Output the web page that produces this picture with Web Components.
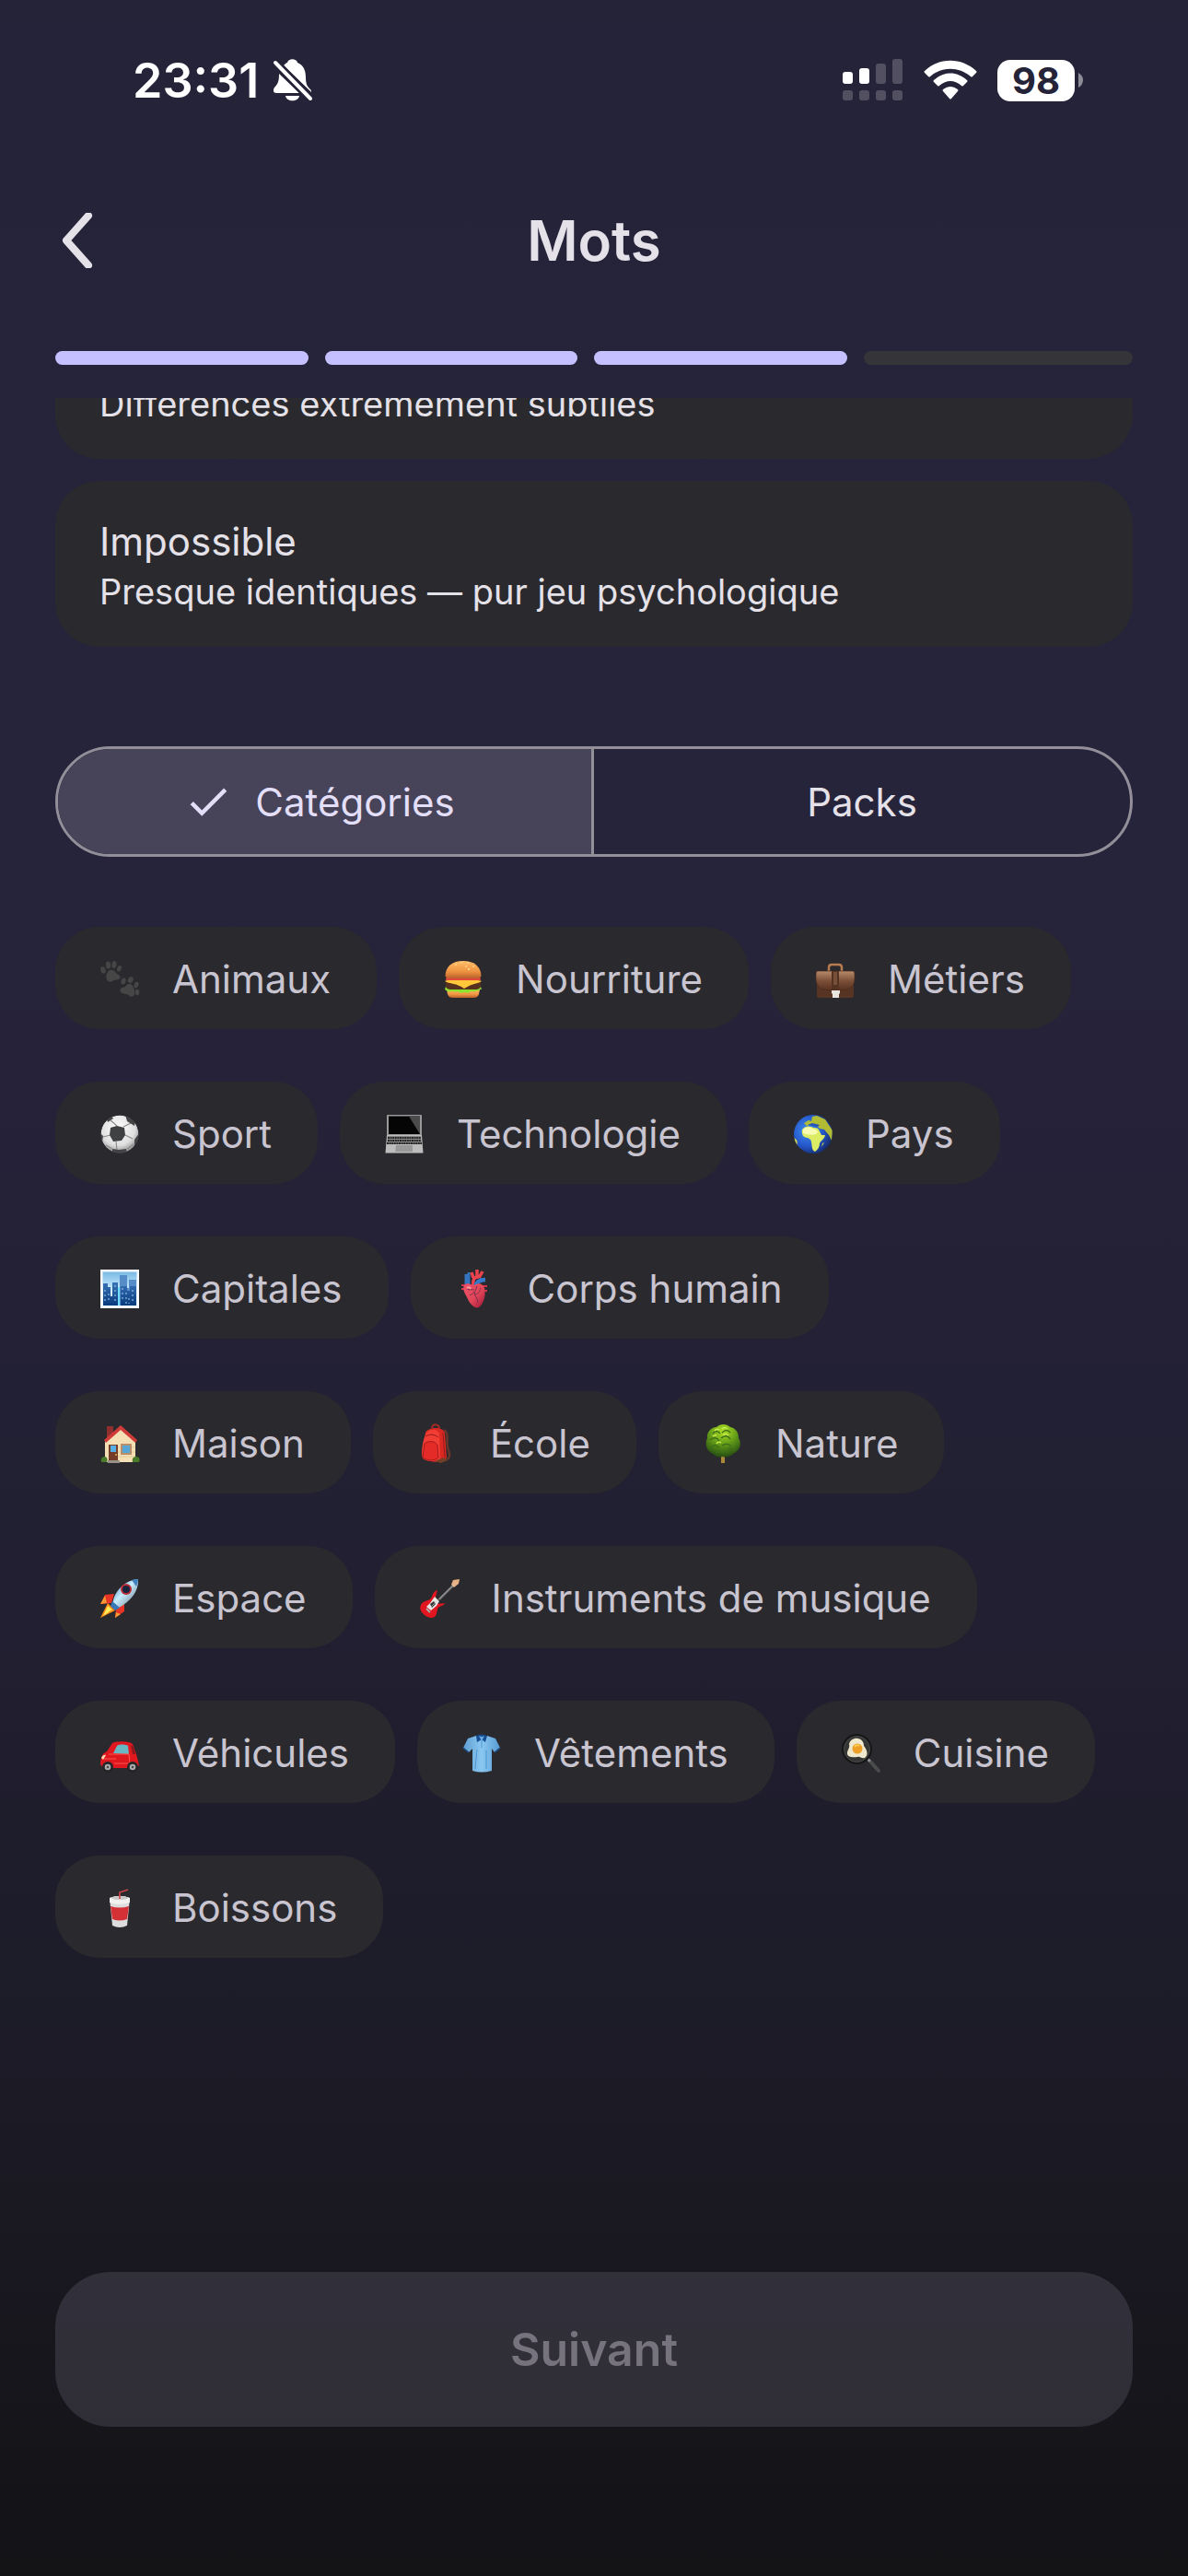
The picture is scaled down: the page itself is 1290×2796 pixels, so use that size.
<!DOCTYPE html>
<html lang="fr">
<head>
<meta charset="UTF-8">
<meta name="viewport" content="width=device-width, initial-scale=1.0">
<title>Mots</title>
<style>
    :root {
        --surface: #2a292e;
        --surface-high: #353438;
        --primary: #c5c0ff;
        --text: #e5e1e9;
        --text-soft: #c8c5d0;
        --outline: #928f99;
        --edge: 60px;
    }
    body {
        margin: 0;
        font-family: Inter, "Liberation Sans", sans-serif;
        color: var(--text);
        background: #131316;
    }
</style>
</head>
<body>
    <app-screen>
        <status-bar slot="top" time="23:31" battery="98"></status-bar>
        <screen-header slot="top">Mots</screen-header>
        <step-progress slot="top" steps="4" done="3"></step-progress>

        <level-card>Différences extrêmement subtiles</level-card>
        <level-card heading="Impossible">Presque identiques — pur jeu psychologique</level-card>
        <source-toggle></source-toggle>
        <chip-list>
            <category-chip icon="paws">Animaux</category-chip>
            <category-chip icon="burger">Nourriture</category-chip>
            <category-chip icon="briefcase">Métiers</category-chip>
            <category-chip icon="ball">Sport</category-chip>
            <category-chip icon="laptop">Technologie</category-chip>
            <category-chip icon="globe">Pays</category-chip>
            <category-chip icon="city">Capitales</category-chip>
            <category-chip icon="heart">Corps humain</category-chip>
            <category-chip icon="house">Maison</category-chip>
            <category-chip icon="backpack">École</category-chip>
            <category-chip icon="tree">Nature</category-chip>
            <category-chip icon="rocket">Espace</category-chip>
            <category-chip icon="guitar">Instruments de musique</category-chip>
            <category-chip icon="car">Véhicules</category-chip>
            <category-chip icon="shirt">Vêtements</category-chip>
            <category-chip icon="pan">Cuisine</category-chip>
            <category-chip icon="cup">Boissons</category-chip>
        </chip-list>

        <next-button slot="bottom">Suivant</next-button>
    </app-screen>

<script>
// Category pictures, all on a 44x44 grid
const ICONS = {
    paws: `
        <g fill="#464646">
            <path d="M9 14c2-3 6-3 8 0 1 2 6 3 5.500 6-.5 3-4 2-6.500 3s-4 2.500-6.500 1S6.500 17 9 14z"/>
            <ellipse cx="4" cy="12" rx="2.600" ry="3.800" transform="rotate(-15 4 12)"/>
            <ellipse cx="9.500" cy="6.500" rx="2.600" ry="4" transform="rotate(-5 9 6)"/>
            <ellipse cx="16" cy="6" rx="2.500" ry="3.900" transform="rotate(8 16 6)"/>
            <ellipse cx="21.500" cy="10" rx="2.200" ry="3.400" transform="rotate(25 21 10)"/>
            <path d="M29 29c2-2.500 5-2.500 6.500-.5 2 3 3 5 2.500 9s-4 4-6 2-4-1-7-2.500-3.500-4-1-5.500 3.500-.5 5-2.500z"/>
            <ellipse cx="26" cy="24" rx="2.500" ry="3.600" transform="rotate(15 26 24)"/>
            <ellipse cx="34" cy="22.500" rx="2.700" ry="3.600" transform="rotate(28 34 22)"/>
            <ellipse cx="40" cy="28" rx="2.300" ry="3.500" transform="rotate(20 40 28)"/>
            <ellipse cx="41" cy="36" rx="2.300" ry="3.300"/>
        </g>`,
    burger: `
        <defs><linearGradient id="bun" x2="0" y2="1"><stop stop-color="#ffbd68"/><stop offset=".6" stop-color="#ee9441"/><stop offset="1" stop-color="#b8602a"/></linearGradient></defs>
        <path d="M4 33h36l-1 5c-1 3-3 4-6 4H11c-3 0-5-1-6-4z" fill="url(#bun)"/>
        <path d="M3 30h38l1 3c-3-1-3 3-6 1-2 3-4 0-6 1-2 3-5 1-7 1-3 2-5 0-7-1-3 2-5-1-7 0-2 1-4 0-7-2z" fill="#8ee22d"/>
        <path d="M3 25h38v4c0 3-3 4-6 4H9c-3 0-6-1-6-4z" fill="#57301f"/>
        <path d="M2 24c0-2 40-2 40 0-4 3-10 2-19 8-8-6-16-5-21-8z" fill="#ffc739"/>
        <rect x="3" y="20" width="38" height="3" rx="1.500" fill="#e5473d"/>
        <path d="M2.500 18C3 8 10 2 22 2s19 6 19.500 16c0 2-3 3-6 3h-27c-3 0-6-1-6-3z" fill="url(#bun)"/>
        <g fill="#ffe6ad"><circle cx="14" cy="6" r=".8"/><circle cx="20" cy="4" r=".8"/><circle cx="25" cy="8" r=".8"/><circle cx="27" cy="4" r=".8"/><circle cx="28" cy="11" r=".9"/><circle cx="33" cy="8" r=".8"/></g>`,
    briefcase: `
        <defs><linearGradient id="bag" x2="0" y2="1"><stop stop-color="#b78b6b"/><stop offset=".5" stop-color="#7d5139"/><stop offset="1" stop-color="#57301f"/></linearGradient></defs>
        <path d="M15 13V9q0-3 3-3h8q3 0 3 3v4" fill="none" stroke="#b67c50" stroke-width="2.500"/>
        <rect x="2" y="14" width="40" height="28" rx="2" fill="#583424"/>
        <path d="M3 13h38q2 0 2 3v5c0 9-6 13-14 13H15C7 34 1 30 1 21v-5q0-3 2-3z" fill="url(#bag)" stroke="#4c2b1d" stroke-width=".7"/>
        <path d="M18 13h8v20h-8z" fill="#553323"/><path d="M20 14h4v14h-4z" fill="#77503c"/>
        <path d="M18 34h9v3l-1 1v4h-7v-4l-1-1z" fill="#e8e5e1"/>`,
    ball: `
        <defs><radialGradient id="skin" cx=".45" cy=".35" r=".65"><stop stop-color="#fff"/><stop offset=".7" stop-color="#dedede"/><stop offset="1" stop-color="#8e8e8e"/></radialGradient><clipPath id="round"><circle cx="22" cy="22" r="20.500"/></clipPath></defs>
        <g clip-path="url(#round)">
            <circle cx="22" cy="22" r="20.500" fill="url(#skin)"/>
            <path d="M19 13l-7-6M19 13M26 14l8-4M28 23l8 4M18 30l1 9M12 23l-8 2M7 34l7 4M30 38l7-5" stroke="#8c8c8c" stroke-width="1.200" fill="none"/>
            <path d="M12 15l7-2 8 2 1 8-4 6-9 1-4-7z" fill="#3f4143"/>
            <path d="M28 1l11 7-1 5-8-5zM8 6l5-4 2 3-6 4zM0 20l4 4-1 7-3-3zM44 20l-6 8 0 7 6-5zM14 38l7 1 8-1 1 6H14z" fill="#414345"/>
        </g>`,
    laptop: `
        <path d="M4 1h36q1 0 1 1v21H3V2q0-1 1-1z" fill="#9a9a9a"/>
        <path d="M5 2.500h34V22H5z" fill="#050505"/><path d="M27 2.500h12V22z" fill="#4b4b4b"/>
        <path d="M3 23h38l1.500 19.500h-41z" fill="#bdbdbd"/>
        <path d="M4 24h36l1 9H3z" fill="#888"/>
        <path d="M4 26h36M4 29h36M3 32h38" stroke="#252525" stroke-width="2" stroke-dasharray="2 .6"/>
        <path d="M13 34h18v7H12z" fill="#999"/>`,
    globe: `
        <defs><radialGradient id="sea" cx=".35" cy=".4" r=".7"><stop stop-color="#3e8df2"/><stop offset=".6" stop-color="#2455c7"/><stop offset="1" stop-color="#142761"/></radialGradient><clipPath id="disc"><circle cx="22" cy="22" r="21"/></clipPath></defs>
        <circle cx="22" cy="22" r="21" fill="url(#sea)"/>
        <g clip-path="url(#disc)">
            <path d="M10 17c3-4 7-4 10-3 3 2 6 0 8 3l3 6 4 0c-1 5-5 6-6 9 0 4-2 7-5 9-4-2-3-6-4-10 0-3-2-4-4-5-5 0-7-4-6-9z" fill="#dcec65"/>
            <path d="M11 17c3-3 7-3 10-1 2 1 4 0 6 4-3 4-10 3-16 1z" fill="#ffffc8" opacity=".8"/>
            <path d="M12 10l5-3 3 1 1-5 5-1 9 4 8 12-1 11-3-6-5-6-5-1-4-4-5-1-5 2z" fill="#b2bb34"/>
            <path d="M0 26c5 1 6 5 3 11zM34 31l-3 5 1-4z" fill="#d6d943"/>
            <path d="M16 12l5-2 8 2-2 2-6-1z" fill="#2355b4"/>
        </g>`,
    city: `
        <defs><linearGradient id="sky" x2="0" y2="1"><stop stop-color="#79b9e6"/><stop offset=".6" stop-color="#d9f4ff"/></linearGradient><linearGradient id="tower" x2="0" y2="1"><stop stop-color="#3973b7"/><stop offset="1" stop-color="#073b7d"/></linearGradient></defs>
        <rect x="1" y="1" width="42" height="42" fill="#f8fbff"/>
        <rect x="3.500" y="3.500" width="37" height="37" fill="url(#sky)"/>
        <path d="M22 7h8v14h2V12h8v28H22z" fill="#568dc8"/>
        <path d="M4 16h5v4h3v10h2V15h6v25H4zM23 19h7v5h3v-5h7v21H23z" fill="url(#tower)"/>
        <path d="M20 20h2v20h-2z" fill="#70dfff"/>
        <path d="M6 23v15M10 27v10M17 18v18M25 21v15M29 26v12M36 23v15M32 32v6" stroke="#a7d5f4" stroke-dasharray="2 3"/>`,
    heart: `
        <defs><linearGradient id="muscle" x2="1" y2="1"><stop stop-color="#ef5269"/><stop offset=".55" stop-color="#e14658"/><stop offset="1" stop-color="#9e1436"/></linearGradient></defs>
        <path d="M12 17V6M15 18V4" stroke="#3575bf" stroke-width="3"/>
        <path d="M20 20c-1-9 1-11 6-11M18 4l2 6M24 1v7M30 3l-4 7" fill="none" stroke="#e9434e" stroke-width="3.500"/>
        <path d="M22 20c1-6 5-8 11-8" fill="none" stroke="#3478c7" stroke-width="4.500"/>
        <path d="M7 18h6M7 22h4M30 19h5M31 24h4" stroke="#d4354b" stroke-width="2"/>
        <path d="M10 18c4-4 8 0 11 0 5-3 9-2 11 3 2 8-1 17-6 21-4 2-10-3-13-11-3-5-5-9-3-13z" fill="url(#muscle)"/>
        <path d="M24 19c-2 7-4 8-8 10m5-4c0 5 4 7 4 12m-3-9c4-1 5-3 6-7m-15 1c4 2 5 0 8 1" fill="none" stroke="#79304f"/>
        <path d="M13 21q3-2 4 1" stroke="#ff9aa2" stroke-width="2" fill="none"/>`,
    house: `
        <path d="M8 3h7v12H8z" fill="#8f302e"/>
        <path d="M6 20L23 4l16 16v22H6z" fill="#f5dfb5"/>
        <path d="M23 2l18 16-2 3L23 7 7 21l-2-3z" fill="#cf3b38"/>
        <path d="M9 26h30M9 31h30M9 36h30" stroke="#dcc394" stroke-width=".7"/>
        <path d="M10 23h10v18H10z" fill="#743d2a"/><path d="M12 24h6v7h-6z" fill="#55aee5"/><circle cx="18" cy="34" r=".9" fill="#f9c04f"/>
        <path d="M23 22h12v12H23z" fill="#b98f69"/><path d="M25 24h8v8h-8z" fill="#58a6d8"/>
        <path d="M9 40h13v3H9z" fill="#999189"/>
        <path d="M2 42c-1-4 1-6 4-6 3 1 3 4 2 6zM36 42c-1-4 1-6 4-6 4 0 4 4 3 6z" fill="#477b2a"/>`,
    backpack: `
        <path d="M29 7c7 4 1 13 5 22 3 8-1 12-7 11" fill="none" stroke="#64382a" stroke-width="2.500"/>
        <path d="M16 5c0-5 8-5 8 1" fill="none" stroke="#a62b25" stroke-width="2"/>
        <path d="M9 10c3-6 18-7 21 0l2 27c-3 6-11 6-21 3-4-1-6-3-6-8z" fill="#d92822"/>
        <path d="M10 10c5-5 12-4 14 1l1 27c-5 4-14 4-19 0-2-9 0-20 4-28z" fill="#f13d34"/>
        <path d="M8 22c4-4 12-3 14 2l1 13c-4 4-12 4-17 0z" fill="#e42b27" stroke="#a31b1a"/>
        <path d="M28 10l2 27M9 14c5-3 10-2 14 1" stroke="#931b1c" fill="none"/>
        <path d="M19 41l10-4 3 3-6 3z" fill="#724028"/>`,
    tree: `
        <defs><radialGradient id="leaf" cx=".5" cy=".2" r=".8"><stop stop-color="#b0e027"/><stop offset=".5" stop-color="#649e18"/><stop offset="1" stop-color="#254d12"/></radialGradient></defs>
        <path d="M20 34h4v9h-4z" fill="#ac8938"/>
        <path d="M15 4c4-4 11-4 15 0 6 1 9 6 9 12 4 6 1 14-6 17-4 4-9 4-11 3-4 1-9 0-11-3C4 30 2 22 5 16 4 10 9 4 15 4z" fill="url(#leaf)"/>
        <path d="M11 11q4-5 8 0m2-1q5-5 9 0m-22 8q6-5 10 1m2-3q6-5 10 1m-21 9q5-5 9 1m3-3q6-4 10 1m-16 7q4-5 8 0m4-3q4-4 8 0" fill="none" stroke="#3e711b" stroke-width="1.500"/>
        <path d="M13 8q2-3 5-1m3-1q3-3 6 0m-16 8q2-2 4-1m7 0q3-3 6 0m-13 9q2-3 5-1" fill="none" stroke="#c6ee4a" stroke-width="1.500"/>`,
    rocket: `
        <defs><linearGradient id="hull" x2="1" y2="1"><stop stop-color="#3773a9"/><stop offset=".45" stop-color="#c7edff"/><stop offset="1" stop-color="#606e7b"/></linearGradient></defs>
        <path d="M16 17L6 18 1 28l12-1zM27 28v8l-10 7 1-11z" fill="#e83426"/>
        <path d="M6 19L1 28l7-1z" fill="#f79830"/><path d="M18 37l-1 6 6-4z" fill="#f79830"/>
        <path d="M9 27L1 43l16-8z" fill="#ff8e17"/><path d="M9 30L4 41l10-7z" fill="#ffec58"/>
        <path d="M15 24C18 12 29 2 42 1c1 13-8 24-21 31-4 1-8-3-6-8z" fill="url(#hull)"/>
        <path d="M35 2q4-1 7-1 0 4-2 8z" fill="#4381bd"/>
        <path d="M14 25l8 7-5 3-5-5z" fill="#3779b8"/>
        <circle cx="29" cy="12" r="6" fill="#b92b36"/><circle cx="29" cy="12" r="4" fill="#15243c"/>`,
    guitar: `
        <path d="M22 23L39 6" stroke="#676767" stroke-width="2.500"/>
        <path d="M35 7l2-5 7-1-1 5-5 4z" fill="#e7b184"/>
        <path d="M20 13c-5 1-5 6-7 9-3 3-9 2-11 7-3 6 4 13 11 14 6 0 6-5 7-9 1-5 7-3 8-7-4 1-6 0-9 1l-3-3c3-4 2-7 4-12z" fill="#e21620"/>
        <path d="M17 20l5 5-3 5-6 5-5-4 4-4z" fill="#e6e6e5"/>
        <path d="M12 28l4-3 2 3-4 4z" fill="#353535"/><path d="M8 33l4 4" stroke="#aaa" stroke-width="2"/>
        <path d="M13 31L40 5" stroke="#c7c7c7" stroke-width=".7"/>`,
    car: `
        <path d="M8 20l6-9c2-2 18-3 22 1l4 11 3 12-3 3H4l-3-4c0-7 2-12 7-14z" fill="#df181f"/>
        <path d="M15 22l4-8c1-2 10-2 12 0l1 9z" fill="#69b7c3"/><path d="M34 13c3 1 4 5 5 10h-3z" fill="#8c171c"/>
        <path d="M10 23h22l1 11M5 28h13M16 33h15" fill="none" stroke="#ff5550"/>
        <path d="M2 27c1-3 4-4 5-3l-3 5z" fill="#ffd8b2"/>
        <circle cx="9" cy="37" r="6" fill="#242527"/><circle cx="9" cy="37" r="3.300" fill="#aaa"/><circle cx="9" cy="37" r="1.200" fill="#444"/>
        <circle cx="36" cy="37" r="6" fill="#242527"/><circle cx="36" cy="37" r="3.300" fill="#aaa"/><circle cx="36" cy="37" r="1.200" fill="#444"/>`,
    shirt: `
        <defs><linearGradient id="cloth"><stop stop-color="#5f9ed1"/><stop offset=".5" stop-color="#8ac7f2"/><stop offset="1" stop-color="#579bd1"/></linearGradient></defs>
        <path d="M16 3L7 6 2 16l6 5 4-4v24q10 3 21 0V17l3 4 6-5-5-10-9-3z" fill="url(#cloth)"/>
        <path d="M16 3q6-3 12 0l-2 7-4-3-5 3z" fill="#164c91"/><path d="M19 3q3 2 6 0l-3 6z" fill="#68a9df"/>
        <path d="M2 16l6 5M42 16l-6 5" stroke="#1b548f" stroke-width="1.500"/><path d="M22 8v8m-5 2l-2 21m12-20v20" stroke="#438bc5" stroke-width=".8"/>`,
    pan: `
        <path d="M29 28l4 4" stroke="#939698" stroke-width="3"/><path d="M33 32l8 9" stroke="#4a4c4c" stroke-width="4" stroke-linecap="round"/>
        <circle cx="17.500" cy="17.500" r="16.500" fill="#151616"/><circle cx="17.500" cy="17.500" r="14" fill="#343634" stroke="#4b4b4b"/>
        <path d="M9 12c1-5 6-7 10-6 4 1 6 4 6 8 4 5 5 10 1 13-4 1-5-2-8-1-5 1-12 0-11-5 1-4 3-5 2-9z" fill="#eee9cd"/>
        <circle cx="18" cy="17" r="5.500" fill="#eca126"/><path d="M15 15q2-3 5-1" stroke="#ffd65a" stroke-width="1.500" fill="none"/>`,
    cup: `
        <path d="M22 13V5l9-3" fill="none" stroke="#c9464b" stroke-width="1.700"/>
        <path d="M11 11q11-4 22 0l-3 30q-8 4-16 0z" fill="#ddd"/>
        <path d="M12 20q10 3 20 0l-2 14q-8 3-16 0z" fill="#d43136"/>
        <path d="M11 11q11-4 22 0v5q-11 4-22 0z" fill="#f2f1ef"/><ellipse cx="22" cy="11" rx="9" ry="2" fill="#c8c8c8"/>
        <path d="M22 12V8" stroke="#c9464b" stroke-width="1.700"/>`
};

class AppScreen extends HTMLElement {
    constructor() {
        super();
        this.attachShadow({ mode: 'open' }).innerHTML = `
            <style>
                :host {
                    display: flex;
                    flex-direction: column;
                    height: 100vh;
                    background: linear-gradient(#252338, #26243b 30%, #252238 46%, #211f31 62%, #1c1b27 80%, #17161c 92%, #131316);
                }
                main {
                    flex: 1;
                    min-height: 0;
                    overflow-y: auto;
                    scrollbar-width: none;
                }
                .content {
                    display: flex;
                    flex-direction: column;
                    gap: 24px;
                    padding: 0 var(--edge) 293px;
                }
                footer {
                    padding: 48px var(--edge) 162px;
                }
            </style>
            <slot name="top"></slot>
            <main><div class="content"><slot></slot></div></main>
            <footer><slot name="bottom"></slot></footer>
        `;
    }

    scrollToEnd() {
        const main = this.shadowRoot.querySelector('main');
        main.scrollTop = main.scrollHeight;
    }
}

class StatusBar extends HTMLElement {
    constructor() {
        super();
        this.attachShadow({ mode: 'open' });
    }

    connectedCallback() {
        this.shadowRoot.innerHTML = `
            <style>
                :host {
                    display: flex;
                    justify-content: space-between;
                    align-items: center;
                    height: 174px;
                    padding: 0 114px 0 144px;
                    color: #fff;
                    font-weight: 600;
                }
                div { display: flex; align-items: center; }
                svg { display: block; }
                .left { gap: 15px; font-size: 52px; }
                .right { gap: 22px; }
                .battery { gap: 4px; }
                .level {
                    display: grid;
                    place-items: center;
                    width: 84px;
                    height: 45px;
                    border-radius: 14px;
                    background: #fff;
                    color: #252338;
                    font-size: 40px;
                    font-weight: 700;
                    line-height: 45px;
                }
            </style>
            <div class="left">
                <span>${this.getAttribute('time')}</span>
                <svg width="44" height="46" viewBox="0 0 44 46" fill="#fff" aria-hidden="true">
                    <path d="M12 7C14 5 15 4 16 4c1-5 10-5 11 0 7 3 9 9 9 16 0 8 2 10 5 13 1 1 1 2 1 3z"/>
                    <path d="M7 16L29 37H4c-3 0-4-3-2-6 4-4 5-7 5-15z"/>
                    <path d="M14 40h15c-1 7-14 7-15 0z"/>
                    <path d="M3 4l38 39" stroke="#252338" stroke-width="9"/>
                    <path d="M3 4l38 39" stroke="#fff" stroke-width="4" stroke-linecap="round"/>
                </svg>
            </div>
            <div class="right">
                <svg width="66" height="46" viewBox="0 0 66 46" fill="#fff" aria-hidden="true">
                    <rect y="14" width="11" height="13" rx="3"/>
                    <rect x="18" y="10" width="11" height="17" rx="3"/>
                    <g opacity=".2">
                        <rect x="36" y="5" width="11" height="22" rx="3"/>
                        <rect x="54" width="11" height="27" rx="3"/>
                        <rect y="34" width="11" height="11" rx="3"/>
                        <rect x="18" y="34" width="11" height="11" rx="3"/>
                        <rect x="36" y="34" width="11" height="11" rx="3"/>
                        <rect x="54" y="34" width="11" height="11" rx="3"/>
                    </g>
                </svg>
                <svg width="58" height="44" viewBox="0 0 58 44" fill="#fff" aria-hidden="true">
                    <path d="M1 12C17-3 41-3 57 12q1 1 0 2l-4 4q-1 1-2 0C38 7 20 7 7 18q-1 1-2 0l-4-4q-1-1 0-2z"/>
                    <path d="M11 22c11-10 25-10 36 0q1 1 0 2l-4 4q-1 1-2 0-12-10-24 0-1 1-2 0l-4-4q-1-1 0-2z"/>
                    <path d="M21 32q8-6 16 0 1 1 0 2l-7 8q-1 1-2 0l-7-8q-1-1 0-2z"/>
                </svg>
                <div class="battery">
                    <span class="level">${this.getAttribute('battery')}</span>
                    <svg width="5" height="16" viewBox="0 0 5 16" aria-hidden="true"><path d="M0 0q5 3 5 8t-5 8z" fill="#8d8c98"/></svg>
                </div>
            </div>
        `;
    }
}

class ScreenHeader extends HTMLElement {
    constructor() {
        super();
        this.attachShadow({ mode: 'open' }).innerHTML = `
            <style>
                :host {
                    display: grid;
                    grid-template-columns: 1fr auto 1fr;
                    align-items: center;
                    height: 174px;
                    padding: 0 var(--edge);
                }
                button {
                    justify-self: start;
                    padding: 0;
                    border: 0;
                    background: none;
                    color: inherit;
                }
                svg { display: block; }
                h1 { margin: 0; font-size: 60px; font-weight: 600; line-height: 72px; }
            </style>
            <button aria-label="Retour">
                <svg width="48" height="60" viewBox="0 0 48 60" fill="none" stroke="currentColor" stroke-width="8" stroke-linecap="round" stroke-linejoin="round"><path d="M36 3L12 30l24 27"/></svg>
            </button>
            <h1><slot></slot></h1>
        `;
    }
}

class StepProgress extends HTMLElement {
    constructor() {
        super();
        this.attachShadow({ mode: 'open' });
    }

    connectedCallback() {
        const steps = Number(this.getAttribute('steps'));
        const done = Number(this.getAttribute('done'));
        let bars = '';
        for (let i = 0; i < steps; i++) {
            bars += `<span class="${i < done ? 'done' : ''}"></span>`;
        }
        this.shadowRoot.innerHTML = `
            <style>
                :host {
                    display: grid;
                    grid-auto-flow: column;
                    grid-auto-columns: 1fr;
                    padding: 33px var(--edge) 36px;
                }
                span {
                    height: 15px;
                    margin-right: 18px;
                    border-radius: 8px;
                    background: var(--surface-high);
                }
                span:last-child { margin-right: 0; }
                .done { background: var(--primary); }
            </style>
            ${bars}
        `;
    }
}

class LevelCard extends HTMLElement {
    constructor() {
        super();
        this.attachShadow({ mode: 'open' });
    }

    connectedCallback() {
        const heading = this.getAttribute('heading');
        this.shadowRoot.innerHTML = `
            <style>
                :host { display: block; }
                button {
                    display: flex;
                    flex-direction: column;
                    width: 100%;
                    padding: 36px 48px;
                    border: 0;
                    border-radius: 48px;
                    background: var(--surface);
                    color: inherit;
                    font: inherit;
                    text-align: left;
                }
                .heading { font-size: 42px; line-height: 60px; }
                .text { font-size: 38px; line-height: 48px; }
            </style>
            <button>
                ${heading ? `<span class="heading">${heading}</span>` : ''}
                <span class="text"><slot></slot></span>
            </button>
        `;
    }
}

class SourceToggle extends HTMLElement {
    constructor() {
        super();
        this.attachShadow({ mode: 'open' }).innerHTML = `
            <style>
                :host {
                    display: grid;
                    grid-template-columns: 1fr 1fr;
                    margin: 84px 0 52px;
                    border: 3px solid var(--outline);
                    border-radius: 60px;
                    overflow: hidden;
                }
                button {
                    display: flex;
                    justify-content: center;
                    align-items: center;
                    gap: 24px;
                    height: 114px;
                    padding: 0 24px;
                    border: 0;
                    background: none;
                    color: inherit;
                    font: inherit;
                    font-size: 42px;
                }
                button:first-of-type { border-right: 3px solid var(--outline); }
                button[aria-pressed="true"] {
                    padding-right: 36px;
                    background: #474459;
                    color: #e4dff9;
                }
                svg { display: none; }
                [aria-pressed="true"] svg { display: block; }
            </style>
            <button aria-pressed="true">${this.check()}Catégories</button>
            <button aria-pressed="false">${this.check()}Packs</button>
        `;
        this.shadowRoot.querySelectorAll('button').forEach(btn => {
            btn.addEventListener('click', () => this.select(btn));
        });
    }

    check() {
        return '<svg width="54" height="54" viewBox="0 0 24 24" fill="currentColor" aria-hidden="true"><path d="M9 16.170L4.830 12l-1.420 1.410L9 19 21 7l-1.410-1.410z"/></svg>';
    }

    select(chosen) {
        this.shadowRoot.querySelectorAll('button').forEach(btn => {
            btn.setAttribute('aria-pressed', btn === chosen);
        });
    }
}

class ChipList extends HTMLElement {
    constructor() {
        super();
        this.attachShadow({ mode: 'open' }).innerHTML = `
            <style>
                :host { display: flex; flex-wrap: wrap; gap: 57px 24px; }
            </style>
            <slot></slot>
        `;
    }
}

class CategoryChip extends HTMLElement {
    constructor() {
        super();
        this.attachShadow({ mode: 'open' });
    }

    connectedCallback() {
        this.shadowRoot.innerHTML = `
            <style>
                :host { display: block; }
                button {
                    display: flex;
                    align-items: center;
                    gap: 35px;
                    height: 111px;
                    padding: 2px 50px 0 48px;
                    border: 0;
                    border-radius: 48px;
                    background: var(--surface);
                    color: var(--text-soft);
                    font: inherit;
                    font-size: 42px;
                    white-space: nowrap;
                }
                button[aria-pressed="true"] { background: #474459; }
            </style>
            <button aria-pressed="false">
                <svg width="44" height="44" viewBox="0 0 44 44" aria-hidden="true">${ICONS[this.getAttribute('icon')]}</svg>
                <span><slot></slot></span>
            </button>
        `;
        const btn = this.shadowRoot.querySelector('button');
        btn.addEventListener('click', () => {
            btn.setAttribute('aria-pressed', btn.getAttribute('aria-pressed') !== 'true');
        });
    }
}

class NextButton extends HTMLElement {
    constructor() {
        super();
        this.attachShadow({ mode: 'open' }).innerHTML = `
            <style>
                :host { display: block; }
                button {
                    display: block;
                    width: 100%;
                    height: 168px;
                    border: 0;
                    border-radius: 60px;
                    background: rgba(229, 225, 255, 0.12);
                    color: #76737e;
                    font: inherit;
                    font-size: 50px;
                    font-weight: 600;
                }
            </style>
            <button disabled><slot></slot></button>
        `;
    }
}

customElements.define('status-bar', StatusBar);
customElements.define('screen-header', ScreenHeader);
customElements.define('step-progress', StepProgress);
customElements.define('level-card', LevelCard);
customElements.define('source-toggle', SourceToggle);
customElements.define('chip-list', ChipList);
customElements.define('category-chip', CategoryChip);
customElements.define('next-button', NextButton);
customElements.define('app-screen', AppScreen);

// Open on the categories, at the end of the list
document.querySelector('app-screen').scrollToEnd();
</script>
</body>
</html>
